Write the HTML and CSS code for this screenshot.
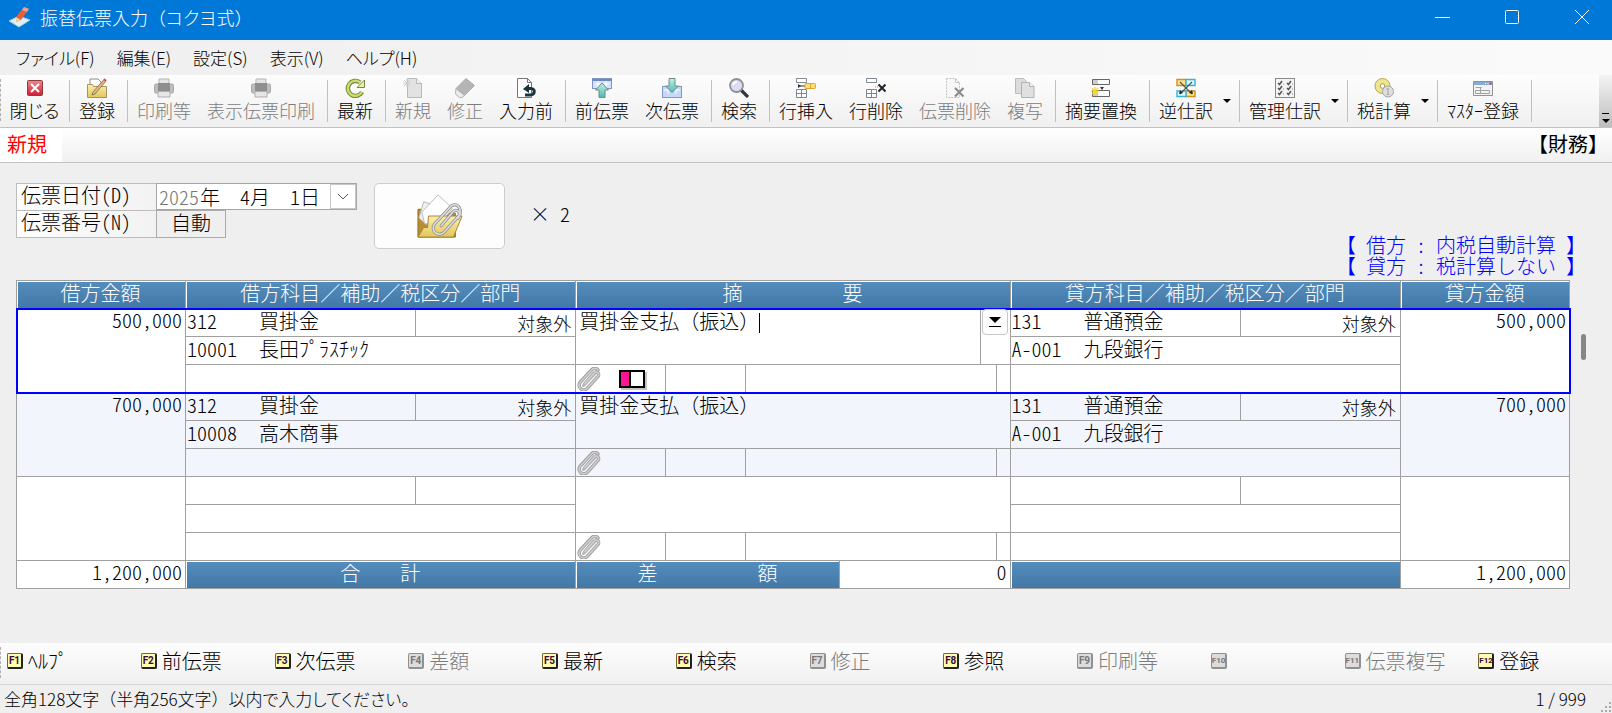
FILE: index.html
```html
<!DOCTYPE html>
<html lang="ja">
<head>
    <meta charset="UTF-8">
    <meta name="viewport" content="width=device-width, initial-scale=1.0">
    <title>振替伝票入力（コクヨ式）</title>
    <link rel="stylesheet" href="styles.css">
</head>
<body>

<!-- shared icons -->
<svg class="defs" aria-hidden="true">
    <defs>
        <linearGradient id="teal" x1="0" y1="0" x2="0" y2="1"><stop offset="0" stop-color="#c4f0e4"/><stop offset="1" stop-color="#4fb9b4"/></linearGradient>
        <linearGradient id="gold" x1="0" y1="0" x2="0" y2="1"><stop offset="0" stop-color="#fbf0b0"/><stop offset="1" stop-color="#e3c65a"/></linearGradient>
        <linearGradient id="red" x1="0" y1="0" x2="0" y2="1"><stop offset="0" stop-color="#ee8a8a"/><stop offset="1" stop-color="#cf1d36"/></linearGradient>
    </defs>
    <symbol id="clip" viewBox="0 0 24 24">
        <g fill="none" stroke-linecap="round">
            <path d="M8 16.500L17 6a2.600 2.600 0 0 1 4 3.400L10.500 21a4.600 4.600 0 0 1-7.500-5.600L14.500 3a4 4 0 0 1 6.500 0" stroke="#9a9a9a" stroke-width="3.400"/>
            <path d="M6.500 18.500L17.500 7" stroke="#b4b4b4" stroke-width="3"/>
            <path d="M8 16.500L17 6a2.600 2.600 0 0 1 4 3.400L10.500 21a4.600 4.600 0 0 1-7.500-5.600L14.500 3a4 4 0 0 1 6.500 0" stroke="#cfcfcf" stroke-width="1.600"/>
        </g>
    </symbol>
    <symbol id="printer" viewBox="0 0 20 20">
        <path d="M5 1h10v6H5z" fill="#e4e4e4" stroke="#b5b5b5"/>
        <rect x="0.500" y="6" width="19" height="9" rx="1.500" fill="#bdbdbd" stroke="#a9a9a9"/>
        <path d="M4 5h12v8H4z" fill="#8e8e8e"/>
        <path d="M4 13.500h12v5.500H4z" fill="#e6e6e6" stroke="#b0b0b0"/>
    </symbol>
    <symbol id="rows" viewBox="0 0 20 20">
        <path d="M.5.500h10v4H.5zM.5 11.500h10v8H.5zM.5 15.500h10M5.500 11.500v8" fill="#fff" stroke="#7d8790"/>
    </symbol>
</svg>

<header class="titlebar">
    <svg class="app-icon" viewBox="0 0 24 24" aria-hidden="true">
        <path d="M1 16l10-5 11 4-11 7z" fill="#dfeff7" stroke="#a9c8da"/>
        <path d="M8 12L16 2l5 2-8 11-5 2z" fill="#e2603c"/>
        <path d="M16 2l5 2-2 3-5-2z" fill="#f6a183"/>
        <path d="M8 12l5 3-5 2z" fill="#f2cf9d"/>
    </svg>
    <h1>振替伝票入力（<span class="kana">コクヨ</span>式）</h1>
    <div class="window-buttons">
        <button type="button" aria-label="最小化"><svg viewBox="0 0 16 16"><path d="M1 8.500h15"/></svg></button>
        <button type="button" aria-label="最大化"><svg viewBox="0 0 16 16"><rect x="1.500" y="1.500" width="13" height="13" rx="1"/></svg></button>
        <button type="button" aria-label="ウィンドウを閉じる"><svg viewBox="0 0 16 16"><path d="M1 1l14 14M15 1L1 15"/></svg></button>
    </div>
</header>

<nav class="menubar kana">
    <button type="button">ファイル(F)</button>
    <button type="button">編集(E)</button>
    <button type="button">設定(S)</button>
    <button type="button">表示(V)</button>
    <button type="button">ヘルプ(H)</button>
</nav>

<div class="toolbar" role="toolbar">
    <button type="button" class="tool first kana">
        <svg viewBox="0 0 20 20"><rect x="2.500" y="2.500" width="15" height="15" rx="1" fill="url(#red)" stroke="#8d3b40"/><path d="M6 6l8 8M14 6l-8 8" stroke="#fff" stroke-width="2"/></svg>
        閉じる
    </button>
    <span class="sep"></span>
    <button type="button" class="tool">
        <svg viewBox="0 0 20 20"><path d="M3 7V1h8l3 3v4" fill="#fff" stroke="#8c8c8c"/><path d="M.5 6.500h5l1 2h13v11H.5z" fill="url(#gold)" stroke="#a8935a"/><path d="M5 17l1-3L17 1.500l2 1.500L8 16z" fill="#e3b77a" stroke="#7e6a4c" stroke-width=".8"/><path d="M17 1l2 2" stroke="#d65555" stroke-width="2"/></svg>
        登録
    </button>
    <span class="sep"></span>
    <button type="button" class="tool" disabled>
        <svg viewBox="0 0 20 20"><use href="#printer"/></svg>
        印刷等
    </button>
    <button type="button" class="tool" disabled>
        <svg viewBox="0 0 20 20"><use href="#printer"/></svg>
        表示伝票印刷
    </button>
    <span class="sep"></span>
    <button type="button" class="tool">
        <svg viewBox="0 0 20 20"><path d="M15 4.500A7.500 7.500 0 1 0 17 14" fill="none" stroke="#75883f" stroke-width="4.500"/><path d="M12 9.500h7.500V2z" fill="#eef2a0" stroke="#75883f"/><path d="M15 4.500A7.500 7.500 0 1 0 16.800 14" fill="none" stroke="#c9dc6c" stroke-width="2.500"/></svg>
        最新
    </button>
    <span class="sep"></span>
    <button type="button" class="tool" disabled>
        <svg viewBox="0 0 20 20"><path d="M4.500.500h9l5 5v14h-14z" fill="#e2e2e2" stroke="#b9b9b9"/><path d="M13.500.500v5h5" fill="#f2f2f2" stroke="#b9b9b9"/><path d="M4 1v8M0 5h8M1 2l6 6M7 2L1 8" stroke="#cdcdcd"/></svg>
        新規
    </button>
    <button type="button" class="tool" disabled>
        <svg viewBox="0 0 20 20"><path d="M11 .5l8.500 7-10 10-8.500-7z" fill="#b5b5b5" stroke="#aaa"/><path d="M1 10.500l8.500 7-2.500 2H4.500L.5 16z" fill="#ececec" stroke="#b0b0b0"/></svg>
        修正
    </button>
    <button type="button" class="tool">
        <svg viewBox="0 0 20 20"><path d="M1.500.500h10l4 4v15h-14z" fill="#fff" stroke="#777"/><path d="M11.500.500v4h4" fill="none" stroke="#777"/><path d="M11 10.500h4c4.500 0 4.500 6.500-1 6.500h-5" fill="none" stroke="#18363c" stroke-width="3"/><path d="M7 11l6-5v9z" fill="#18363c"/></svg>
        入力前
    </button>
    <span class="sep"></span>
    <button type="button" class="tool">
        <svg viewBox="0 0 20 20"><rect x=".5" y=".5" width="19" height="10" fill="#d3e1fc" stroke="#8196c2"/><path d="M.5 2h19" stroke="#6f87bd" stroke-width="2"/><path d="M3 6h14M6 3v7M14 3v7" stroke="#fff"/><path d="M10 5l6.500 7H13v7.500H7V12H3.500z" fill="url(#teal)" stroke="#6c8c8c"/></svg>
        前伝票
    </button>
    <button type="button" class="tool">
        <svg viewBox="0 0 20 20"><rect x=".5" y="8.500" width="19" height="11" fill="#c7d9fb" stroke="#8196c2"/><path d="M2 12h16M6 9v7M14 9v7" stroke="#fff"/><path d="M10 14.500L3.500 8H7V.5h6V8h3.500z" fill="url(#teal)" stroke="#6c8c8c"/></svg>
        次伝票
    </button>
    <span class="sep"></span>
    <button type="button" class="tool">
        <svg viewBox="0 0 20 20"><path d="M12 12l7 7" stroke="#34343e" stroke-width="3.200"/><circle cx="7.500" cy="7.500" r="6.500" fill="#d9dcf7" stroke="#909090" stroke-width="1.800"/><path d="M4 7a4 4 0 0 1 4-3" fill="none" stroke="#fff" stroke-width="2"/></svg>
        検索
    </button>
    <span class="sep"></span>
    <button type="button" class="tool">
        <svg viewBox="0 0 20 20"><use href="#rows"/><path d="M2 8h7" stroke="#333"/><path d="M2 6v4l3-2z" fill="#333"/><rect x="9" y="5.500" width="10.500" height="5" rx="1" fill="#ffdf70" stroke="#d9a733"/><path d="M14.500 6v4" stroke="#d9a733"/></svg>
        行挿入
    </button>
    <button type="button" class="tool">
        <svg viewBox="0 0 20 20"><use href="#rows"/><path d="M9 9h3" stroke="#999" stroke-dasharray="1 1"/><path d="M12.500 6.500l7 7M19.500 6.500l-7 7" stroke="#1d262b" stroke-width="2"/></svg>
        行削除
    </button>
    <button type="button" class="tool" disabled>
        <svg viewBox="0 0 20 20"><path d="M1.500.500h9l4 4v15h-13z" fill="#f7f7f7" stroke="#c4c4c4" stroke-dasharray="2 1"/><path d="M10.500.500v4h4" fill="none" stroke="#c4c4c4"/><path d="M10 10l8.500 8.500M18.500 10L10 18.500" stroke="#8c8c8c" stroke-width="2.200"/></svg>
        伝票削除
    </button>
    <button type="button" class="tool" disabled>
        <svg viewBox="0 0 20 20"><path d="M.5.500h8l3 3v12H.5z" fill="#dcdcdc" stroke="#bbb"/><path d="M6.500 4.500h8l4.500 4v11H6.500z" fill="#e0e0e0" stroke="#b3b3b3"/><path d="M14.500 4.500v4H19" fill="#f3f3f3" stroke="#b3b3b3"/></svg>
        複写
    </button>
    <span class="sep"></span>
    <button type="button" class="tool">
        <svg viewBox="0 0 20 20"><path d="M1.500 1.500h17v5h-17zM1.500 12.500h17v6h-17z" fill="#fafafa" stroke="#666"/><path d="M2 2h5v4H2zM2 13h5v5H2z" fill="#ccc"/><path d="M9 9h4l-2 3z" fill="#333"/><path d="M4 9v8M0 13h8M1 10l6 6M7 10l-6 6" stroke="#f5dc2c" stroke-width="1.200"/></svg>
        摘要置換
    </button>
    <span class="sep"></span>
    <button type="button" class="tool">
        <svg viewBox="0 0 20 20"><path d="M1 1.500h9v6H1zM10 13h9v5.500h-9z" fill="#ffe391" stroke="#cf9022" stroke-width="1.400"/><path d="M10 1.500h9v6h-9zM1 13h9v5.500H1z" fill="#dcf8ff" stroke="#38b4d2" stroke-width="1.400"/><path d="M4 4l12 12M16 4L4 16" stroke="#555" stroke-width="1.200"/><path d="M3 16l1-4 3 3zM17 16l-1-4-3 3z" fill="#222"/></svg>
        逆仕訳
    </button>
    <button type="button" class="tool-more" aria-label="逆仕訳のメニュー"></button>
    <span class="sep"></span>
    <button type="button" class="tool">
        <svg viewBox="0 0 20 20"><rect x=".5" y=".5" width="19" height="19" fill="#f4f4f4" stroke="#888"/><path d="M3 5l1.500 1.500L7 3M12 5l1.500 1.500L16 3M3 10l1.500 1.500L7 8M12 10l1.500 1.500L16 8M3 15l1.500 1.500L7 13M12 15l1.500 1.500L16 13" fill="none" stroke="#555" stroke-width="1.500"/><path d="M8 6h1M17 6h1M8 11h1M17 11h1M8 16h1M17 16h1" stroke="#888"/></svg>
        管理仕訳
    </button>
    <button type="button" class="tool-more" aria-label="管理仕訳のメニュー"></button>
    <span class="sep"></span>
    <button type="button" class="tool">
        <svg viewBox="0 0 20 20"><circle cx="8.500" cy="8" r="7.500" fill="#f0e48c" stroke="#b8a650"/><circle cx="8.500" cy="8" r="2.300" fill="#fff" stroke="#a39a62"/><circle cx="14" cy="13.500" r="5.500" fill="#dedede" stroke="#a5a5a5"/><path d="M12.500 11.500l1.500-1v6M12.500 16.500h3" fill="none" stroke="#aaa" stroke-width="1.200"/></svg>
        税計算
    </button>
    <button type="button" class="tool-more" aria-label="税計算のメニュー"></button>
    <span class="sep"></span>
    <button type="button" class="tool">
        <svg viewBox="0 0 20 20"><path d="M.5 3.500h19v14H.5z" fill="#f2f2f2" stroke="#8d949c"/><path d="M1 4h18v3H1z" fill="#86acd0"/><path d="M12 5.500h1M14.500 5.500h1" stroke="#fff"/><path d="M16.500 5.500h2" stroke="#d14b4b" stroke-width="2"/><path d="M2.500 9.500h6M2.500 12.500h14v3h-14zM7.500 10v5" fill="none" stroke="#a2a2a2"/></svg>
        ﾏｽﾀｰ登録
    </button>
    <span class="sep"></span>
    <button type="button" class="overflow" aria-label="その他のボタン"></button>
</div>

<div class="modebar">
    <strong class="mode">新規</strong>
    <strong class="module">【財務】</strong>
</div>

<main>
    <div class="voucher-head">
        <div class="voucher-form">
            <label for="year">伝票日付(D)</label>
            <div class="date-box">
                <input id="year" class="year" value="2025">年
                <input class="day-part" aria-label="月" value="4">月
                <input class="day-part" aria-label="日" value="1">日
                <button type="button" aria-label="カレンダー"><svg viewBox="0 0 12 8"><path d="M1 1l5 5 5-5"/></svg></button>
            </div>
            <label for="number">伝票番号(N)</label>
            <button type="button" id="number" class="auto">自動</button>
        </div>
        <button type="button" class="attach" aria-label="添付ファイル">
            <svg viewBox="0 0 48 48">
                <path d="M1 17h10l3 4h26v25H1z" fill="#b88d33" stroke="#8f6d24"/>
                <path d="M2 26l5-17 8 3-5 21z" fill="#f1f1f1" stroke="#b5b5b5"/>
                <path d="M5 20L22 2l15 14-13 16H8z" fill="#fff" stroke="#b9b9b9"/>
                <path d="M12 24h35l-9 22H1l6-10h4z" fill="url(#gold)" stroke="#a58231"/>
                <g transform="translate(14 11) scale(1.400)" fill="none" stroke-linecap="round">
                    <path d="M8 16.500L17 6a2.600 2.600 0 0 1 4 3.400L10.500 21a4.600 4.600 0 0 1-7.500-5.600L14.500 3a4 4 0 0 1 7 0q2 4-1 8" stroke="#929292" stroke-width="2.400"/>
                    <path d="M8 16.500L17 6a2.600 2.600 0 0 1 4 3.400L10.500 21a4.600 4.600 0 0 1-7.500-5.600L14.500 3a4 4 0 0 1 7 0q2 4-1 8" stroke="#dcdcdc" stroke-width="1.200"/>
                </g>
            </svg>
        </button>
        <output class="attach-count">×&ensp;2</output>
        <div class="tax-notes">
            <p>【&ensp;借方&ensp;:&ensp;内税自動計算&ensp;】</p>
            <p>【&ensp;貸方&ensp;:&ensp;税計算しない&ensp;】</p>
        </div>
    </div>

    <div class="sheet">
        <table class="slip">
            <colgroup>
                <col class="c-amount">
                <col class="c-account"><col class="c-tax">
                <col class="c-clip"><col class="c-tag"><col class="c-diff"><col class="c-rest"><col class="c-pick"><col class="c-edge">
                <col class="c-account"><col class="c-tax">
                <col class="c-amount">
            </colgroup>
            <thead>
                <tr>
                    <th>借方金額</th>
                    <th colspan="2">借方科目／補助／税区分／部門</th>
                    <th colspan="6">摘　　　　　要</th>
                    <th colspan="2">貸方科目／補助／税区分／部門</th>
                    <th>貸方金額</th>
                </tr>
            </thead>
            <tbody class="selected">
                <tr>
                    <td rowspan="3" class="amount">500,000</td>
                    <td><span class="code">312</span>買掛金</td>
                    <td class="tax">対象外</td>
                    <td rowspan="2" colspan="4" class="memo"><textarea aria-label="摘要" rows="2">買掛金支払（振込）</textarea><i class="caret"></i></td>
                    <td rowspan="2" colspan="2" class="memo"><button type="button" class="pick" aria-label="摘要一覧"><svg viewBox="0 0 12 12"><path d="M0 1h12L6 7z" fill="#000"/><path d="M0 10.500h12" stroke="#000"/></svg></button></td>
                    <td><span class="code">131</span>普通預金</td>
                    <td class="tax">対象外</td>
                    <td rowspan="3" class="amount">500,000</td>
                </tr>
                <tr>
                    <td colspan="2"><span class="code">10001</span>長田ﾌﾟﾗｽﾁｯｸ</td>
                    <td colspan="2"><span class="code">A-001</span>九段銀行</td>
                </tr>
                <tr>
                    <td colspan="2"></td>
                    <td class="marks-cell"><div class="marks"><svg class="clip"><use href="#clip"/></svg><span class="sticky"></span></div></td>
                    <td></td><td colspan="3"></td><td></td>
                    <td colspan="2"></td>
                </tr>
            </tbody>
            <tbody class="even">
                <tr>
                    <td rowspan="3" class="amount">700,000</td>
                    <td><span class="code">312</span>買掛金</td>
                    <td class="tax">対象外</td>
                    <td rowspan="2" colspan="6" class="memo"><p>買掛金支払（振込）</p></td>
                    <td><span class="code">131</span>普通預金</td>
                    <td class="tax">対象外</td>
                    <td rowspan="3" class="amount">700,000</td>
                </tr>
                <tr>
                    <td colspan="2"><span class="code">10008</span>高木商事</td>
                    <td colspan="2"><span class="code">A-001</span>九段銀行</td>
                </tr>
                <tr>
                    <td colspan="2"></td>
                    <td class="marks-cell"><div class="marks"><svg class="clip"><use href="#clip"/></svg></div></td>
                    <td></td><td colspan="3"></td><td></td>
                    <td colspan="2"></td>
                </tr>
            </tbody>
            <tbody>
                <tr>
                    <td rowspan="3"></td>
                    <td></td><td></td>
                    <td rowspan="2" colspan="6"></td>
                    <td></td><td></td>
                    <td rowspan="3"></td>
                </tr>
                <tr>
                    <td colspan="2"></td>
                    <td colspan="2"></td>
                </tr>
                <tr>
                    <td colspan="2"></td>
                    <td class="marks-cell"><div class="marks"><svg class="clip"><use href="#clip"/></svg></div></td>
                    <td></td><td colspan="3"></td><td></td>
                    <td colspan="2"></td>
                </tr>
            </tbody>
            <tfoot>
                <tr>
                    <td class="amount">1,200,000</td>
                    <th colspan="2">合　　計</th>
                    <th colspan="3">差　　　　　額</th>
                    <td colspan="3" class="amount">0</td>
                    <th colspan="2"></th>
                    <td class="amount">1,200,000</td>
                </tr>
            </tfoot>
        </table>
        <div class="scroll"></div>
    </div>
</main>

<div class="fkeys">
    <button type="button"><kbd>F1</kbd>ﾍﾙﾌﾟ</button>
    <button type="button"><kbd>F2</kbd>前伝票</button>
    <button type="button"><kbd>F3</kbd>次伝票</button>
    <button type="button" disabled><kbd>F4</kbd>差額</button>
    <button type="button"><kbd>F5</kbd>最新</button>
    <button type="button"><kbd>F6</kbd>検索</button>
    <button type="button" disabled><kbd>F7</kbd>修正</button>
    <button type="button"><kbd>F8</kbd>参照</button>
    <button type="button" disabled><kbd>F9</kbd>印刷等</button>
    <button type="button" disabled><kbd class="wide">F10</kbd></button>
    <button type="button" disabled><kbd class="wide">F11</kbd>伝票複写</button>
    <button type="button"><kbd class="wide">F12</kbd>登録</button>
</div>

<footer class="status">
    <span>全角128文字（半角256文字）<span class="kana">以内で入力してください。</span></span>
    <span class="pages">1 / 999</span>
    <svg class="grip" viewBox="0 0 12 12"><path d="M9 1h2v2H9zM5 5h2v2H5zM9 5h2v2H9zM1 9h2v2H1zM5 9h2v2H5zM9 9h2v2H9z" fill="#aaa"/></svg>
</footer>

</body>
</html>
```

FILE: styles.css
```css
* {
    box-sizing: border-box;
}
body {
    margin: 0;
    min-height: 100vh;
    display: flex;
    flex-direction: column;
    background: #efefef;
    color: #000;
    font-family: "Noto Sans CJK JP", sans-serif;
    font-size: 18px;
    font-weight: 300;
    line-height: 20px;
}
button, input, textarea {
    font: inherit;
    font-feature-settings: inherit;
    color: inherit;
    margin: 0;
    padding: 0;
    border: none;
    background: none;
}
p, h1 {
    margin: 0;
    font: inherit;
}
.defs {
    position: absolute;
    width: 0;
    height: 0;
}
.kana {
    font-feature-settings: "palt";
}

/* title and menu */
.titlebar {
    display: flex;
    align-items: center;
    height: 40px;
    padding: 0 0 6px 8px;
    background: #0078d7;
    color: #fff;
}
.app-icon {
    width: 24px;
    height: 24px;
    margin-right: 8px;
}
.window-buttons {
    display: flex;
    gap: 10px;
    margin-left: auto;
}
.window-buttons button {
    display: flex;
    align-items: center;
    justify-content: center;
    width: 60px;
    height: 34px;
}
.window-buttons svg {
    width: 16px;
    height: 16px;
    fill: none;
    stroke: #fff;
}
.menubar {
    display: flex;
    gap: 22px;
    height: 35px;
    padding: 0 16px;
    background: linear-gradient(to right, #efefef, #fafafa);
    font-size: 17px;
}

/* toolbar */
.toolbar {
    display: flex;
    align-items: stretch;
    height: 53px;
    padding-left: 4px;
    border-bottom: 1px solid #c3c3c3;
    background: linear-gradient(#fdfdfd, #f0f0f0);
    position: relative;
    white-space: nowrap;
}
.toolbar::before, .fkeys::before {
    content: "";
    position: absolute;
    left: 0;
    top: 4px;
    bottom: 6px;
    border-left: 1px dashed #b0b0b0;
}
.tool {
    display: flex;
    flex-direction: column;
    align-items: center;
    gap: 2px;
    padding: 3px 8px 0;
}
.tool.first {
    width: 61px;
    padding: 3px 0 0;
}
.tool svg {
    width: 20px;
    height: 20px;
}
button:disabled {
    color: #7c7c7c;
}
.sep {
    width: 1px;
    margin: 5px 1px 5px 4px;
    background: #c0c0c0;
}
.tool-more {
    width: 14px;
}
.tool-more::before {
    content: "";
    display: block;
    width: 0;
    margin-left: 2px;
    border: 4px solid transparent;
    border-top-color: #000;
    border-bottom: none;
}
.overflow {
    display: flex;
    flex-direction: column;
    align-items: center;
    justify-content: flex-end;
    gap: 5px;
    width: 13px;
    margin-left: auto;
    padding-bottom: 4px;
    background: linear-gradient(#f4f4f4, #bdbdbd);
}
.overflow::before {
    content: "";
    width: 7px;
    height: 1px;
    background: #000;
}
.overflow::after {
    content: "";
    border: 4px solid transparent;
    border-top-color: #000;
    border-bottom: none;
}

/* mode line */
.modebar {
    display: flex;
    align-items: stretch;
    justify-content: space-between;
    height: 35px;
    border-bottom: 1px solid #c3c3c3;
    background: linear-gradient(#fff, #f0f0f0);
    font-size: 20px;
    line-height: 32px;
}
.mode {
    width: 62px;
    padding-left: 7px;
    background: #fff;
    color: #f00;
}
.module {
    padding-right: 4px;
}

/* voucher */
main {
    flex: 1;
    padding: 20px 26px 0 16px;
    font-size: 20px;
    font-feature-settings: "hwid";
}
.voucher-head {
    display: flex;
    align-items: flex-start;
}
.voucher-form {
    display: grid;
    grid-template-columns: 141px 200px;
    grid-template-rows: 27px 28px;
}
.voucher-form label {
    padding: 1px 4px;
    border: 1px solid #bdbdbd;
    background: linear-gradient(to right, #fdfdfd, #f2f2f2);
}
.voucher-form label:first-child {
    border-bottom: none;
}
.date-box {
    display: flex;
    align-items: center;
    border: 1px solid #a6a6a6;
    margin-left: -1px;
    padding-left: 2px;
    background: #fff;
    line-height: 18px;
}
.year {
    width: 41px;
    color: #777;
}
.day-part {
    width: 30px;
    text-align: right;
}
.date-box button {
    width: 26px;
    height: 25px;
    margin-left: auto;
    border: 1px solid #c8c8c8;
}
.date-box svg {
    display: block;
    width: 12px;
    height: 8px;
    margin: auto;
    fill: none;
    stroke: #555;
}
.auto {
    width: 70px;
    margin-left: -1px;
    padding-bottom: 3px;
    border: 1px solid #ababab;
}
.attach {
    width: 131px;
    height: 66px;
    margin-left: 17px;
    border: 1px solid #cdcdcd;
    border-radius: 5px;
    background: #fdfdfd;
}
.attach svg {
    display: block;
    width: 48px;
    height: 46px;
    margin: auto;
}
.attach-count {
    margin: 21px 0 0 25px;
}
.tax-notes {
    margin: 51px 0 4px auto;
    color: #00f;
    line-height: 21px;
}

/* slip table */
.sheet {
    position: relative;
    margin-right: 16px;
}
.slip {
    width: 100%;
    table-layout: fixed;
    border-collapse: collapse;
    background: #fff;
}
.c-amount { width: 169px; }
.c-account { width: 230px; }
.c-tax { width: 160px; }
.c-clip { width: 90px; }
.c-tag { width: 80px; }
.c-diff { width: 94px; }
.c-rest { width: 140px; }
.c-pick { width: 16px; }
.c-edge { width: 14px; }
.slip th, .slip td {
    height: 28px;
    padding: 0 2px 4px 1px;
    border: 1px solid #a0a0a0;
    white-space: nowrap;
}
.slip th {
    background: linear-gradient(#548dbd, #4277a5);
    box-shadow: inset 1px 1px #fff;
    color: #fff;
    font-weight: 300;
    font-feature-settings: normal;
    white-space: pre;
}
.slip .amount {
    padding: 1px 3px 0 0;
    text-align: right;
    vertical-align: top;
}
.slip .tax {
    padding: 1px 4px 0 0;
    font-size: 18px;
    text-align: right;
}
.slip .memo {
    position: relative;
    padding: 2px 3px 0;
    font-feature-settings: normal;
    vertical-align: top;
}
.slip .marks-cell {
    padding: 0 1px;
}
.code {
    display: inline-block;
    width: 72px;
}
.selected {
    outline: 2px solid #00f;
    outline-offset: -1px;
}
.even {
    background: #f2f6fc;
}
textarea {
    display: block;
    width: 100%;
    height: 44px;
    resize: none;
    overflow: hidden;
    outline: none;
}
.caret {
    position: absolute;
    left: 183px;
    top: 4px;
    width: 1px;
    height: 20px;
    background: #000;
}
.slip .pick {
    display: flex;
    align-items: center;
    justify-content: center;
    width: 26px;
    height: 26px;
    margin: -2px -2px 0;
    border: 1px solid #c8c8c8;
    border-radius: 4px;
    background: #fdfdfd;
}
.pick svg {
    width: 12px;
    height: 12px;
}
.marks {
    display: flex;
    align-items: center;
    gap: 18px;
}
.clip {
    width: 24px;
    height: 24px;
}
.sticky {
    width: 26px;
    height: 18px;
    border: 2px solid #000;
    background: linear-gradient(to right, #ff1493 8px, #000 8px, #000 10px, #fff 10px);
    box-shadow: 2px 2px #c4c4c4;
}
.scroll {
    position: absolute;
    right: -16px;
    top: 54px;
    width: 5px;
    height: 26px;
    border-radius: 3px;
    background: #868686;
}

/* function keys and status */
.fkeys {
    position: relative;
    display: grid;
    grid-template-columns: repeat(12, 1fr);
    height: 42px;
    padding: 0 0 6px 7px;
    border-bottom: 1px solid #d4d4d4;
    background: linear-gradient(#fdfdfd, #f0f0f0);
    font-size: 20px;
    line-height: 18px;
    white-space: nowrap;
}
.fkeys button {
    display: flex;
    align-items: center;
    gap: 5px;
}
kbd {
    width: 16px;
    height: 16px;
    border: 1px solid #6f6a2a;
    border-right: 2px solid #222;
    border-bottom: 2px solid #222;
    border-radius: 2px;
    background: #fffbb0;
    color: #3a0a3a;
    font: bold 10px/13px Roboto, sans-serif;
    text-align: center;
}
kbd.wide {
    font-size: 8px;
}
button:disabled kbd {
    border-color: #909090;
    background: #dcdcdc;
    color: #777;
}
.status {
    display: flex;
    align-items: center;
    height: 28px;
    padding: 0 0 0 4px;
    font-size: 17px;
}
.pages {
    margin-left: auto;
}
.grip {
    align-self: flex-end;
    width: 12px;
    height: 12px;
    margin-left: 14px;
}
```
